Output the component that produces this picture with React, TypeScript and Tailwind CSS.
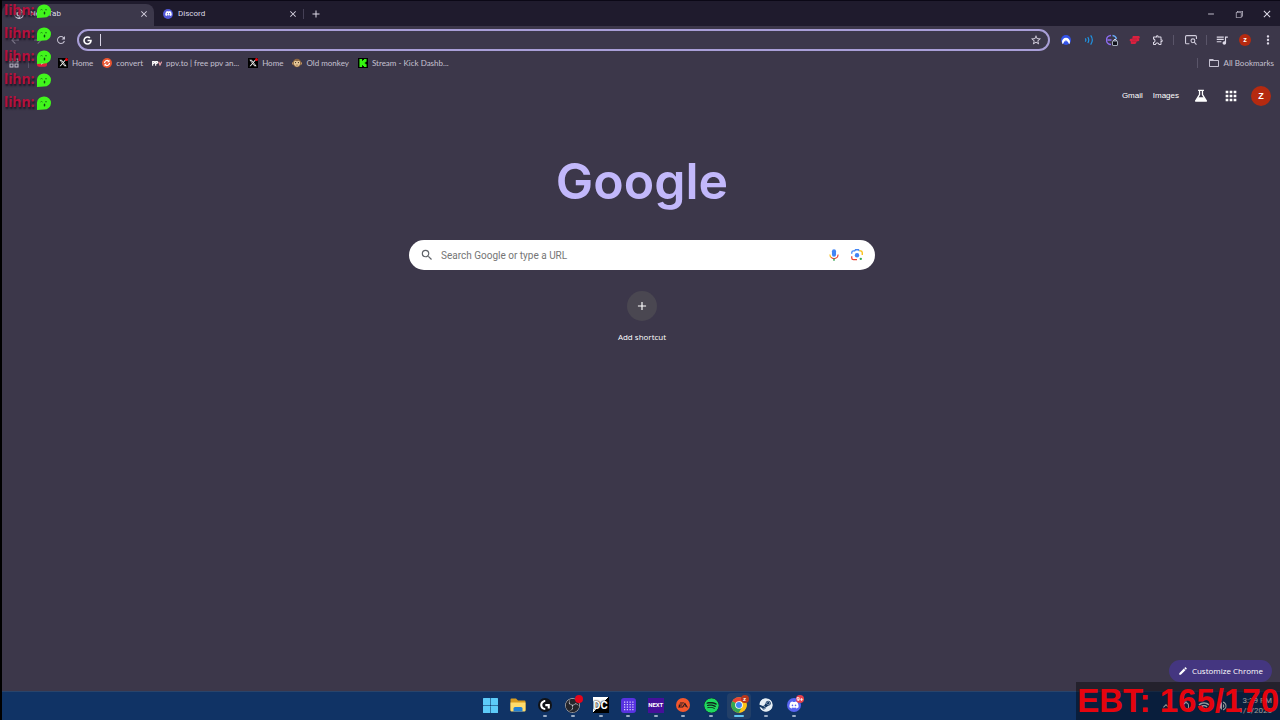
import type { ComponentType, ReactNode } from "react";
import {
  MdAdd, MdApps, MdArrowBack, MdArrowForward, MdClose, MdEdit, MdFolderOpen, MdMoreVert,
  MdOutlineExtension, MdQueueMusic, MdRefresh, MdSearch, MdStarOutline, MdWifi,
  MdVolumeUp, MdKeyboardArrowUp, MdNotificationsNone, MdOutlineGridView, MdRemove,
} from "react-icons/md";
import { FaDiscord, FaGoogle, FaSpotify, FaSteam, FaXTwitter } from "react-icons/fa6";
import { SiEa, SiKick, SiLogitechg, SiNordvpn, SiObsstudio } from "react-icons/si";
import { VscChromeRestore } from "react-icons/vsc";

type Icon = ComponentType<{ className?: string }>;

function GlobeIcon() {
  return (
    <svg viewBox="0 0 24 24" className="size-2.5">
      <circle cx="12" cy="12" r="10.5" fill="none" stroke="#d4d0df" strokeWidth="3" />
      <circle cx="12" cy="12" r="4.5" fill="none" stroke="#d4d0df" strokeWidth="3" />
      <path d="M12 7.5h9M8 14.5 4 7M16 14.5 12 22" stroke="#d4d0df" strokeWidth="3" />
    </svg>
  );
}

function ChromeIcon() {
  return (
    <svg viewBox="0 0 48 48" className="size-4">
      <circle cx="24" cy="24" r="23" fill="#fbc116" />
      <path d="M24 24 4 12.600A23 23 0 0 1 44 12.500Z" fill="#ea4335" />
      <path d="M24 24 4 12.500A23 23 0 0 0 24 47L34 29.500Z" fill="#34a853" />
      <path d="M24 12.500h20a23 23 0 0 1-20 34.500l10-17.500Z" fill="#fbc116" />
      <circle cx="24" cy="24" r="11.500" fill="#fff" />
      <circle cx="24" cy="24" r="9" fill="#4285f4" />
    </svg>
  );
}

function XIcon() {
  return (
    <span className="relative flex size-2.5 items-center justify-center bg-black text-white">
      <FaXTwitter className="size-2" />
      <span className="absolute top-0 right-0 size-[3px] rounded-full bg-red-600" />
    </span>
  );
}

function ConvertIcon() {
  return (
    <svg viewBox="0 0 24 24" className="size-2.5">
      <circle cx="12" cy="12" r="12" fill="#e9532f" />
      <path d="M6 12a6 6 0 0 1 10-4.500M18 12a6 6 0 0 1-10 4.500" fill="none" stroke="#fff" strokeWidth="3" />
      <path d="M18 4v6h-6zM6 20v-6h6z" fill="#fff" />
    </svg>
  );
}

function PpvIcon() {
  return (
    <svg viewBox="0 0 30 15" className="h-[5px] w-2.5">
      <path d="M2 14V2h5q3 4-4 6M11 14V2h5q3 4-4 6" fill="none" stroke="#fff" strokeWidth="3.500" />
      <path d="m20 2 4 10 5-10" fill="none" stroke="#f0a0a8" strokeWidth="3.500" />
    </svg>
  );
}

function MonkeyIcon() {
  return (
    <svg viewBox="0 0 24 24" className="size-2.5">
      <circle cx="3.500" cy="13" r="3.500" fill="#c79a68" />
      <circle cx="20.500" cy="13" r="3.500" fill="#c79a68" />
      <circle cx="12" cy="12" r="10" fill="#8c6640" />
      <path d="M12 8c8-5 9 5 6 9-3 5-9 5-12 0-3-4-2-14 6-9Z" fill="#e8c99a" />
      <circle cx="8.500" cy="11" r="1.500" fill="#3a2a1c" />
      <circle cx="15.500" cy="11" r="1.500" fill="#3a2a1c" />
      <path d="M9 17h6" stroke="#6f482c" strokeWidth="1.500" />
    </svg>
  );
}

function KickIcon() {
  return (
    <span className="flex size-2.5 items-center justify-center bg-black text-[#35f511]">
      <SiKick className="size-2" />
    </span>
  );
}

function YouTubeIcon() {
  return (
    <svg viewBox="0 0 24 18" className="h-2 w-2.5">
      <rect width="24" height="18" rx="5" fill="#e0203c" />
      <path d="m10 5 6 4-6 4z" fill="#fff" />
    </svg>
  );
}

function GhostIcon() {
  return (
    <svg viewBox="0 0 28 28" className="size-3.5">
      <path d="M0 28V13A14 13 0 1 1 14 27Z" fill="#41f51c" />
      <path d="M7 12q2-2 4 0M16 12q2-2 4 0" fill="none" stroke="#136b13" strokeWidth="1.600" />
      <ellipse cx="15" cy="18" rx="1.600" ry="3" fill="#0c4c10" />
    </svg>
  );
}

function MicIcon() {
  return (
    <svg viewBox="0 0 24 24" className="size-3.5">
      <rect x="8.500" y="2" width="7" height="13" rx="3.500" fill="#4285f4" />
      <path d="M5 11a7 7 0 0 0 2.500 5.500" fill="none" stroke="#fbbc04" strokeWidth="1.800" />
      <path d="M7 16a7 7 0 0 0 12-5" fill="none" stroke="#ea4335" strokeWidth="1.800" />
      <path d="M12 18v4" stroke="#34a853" strokeWidth="2.500" />
    </svg>
  );
}

function LensIcon() {
  return (
    <svg viewBox="0 0 24 24" className="size-3.5" fill="none" strokeWidth="2.200">
      <path d="M3 10V8a3 3 0 0 1 3-3h2l1.500-2h5L16 5" stroke="#4285f4" />
      <path d="M16 5h2a3 3 0 0 1 3 3v4" stroke="#fbbc04" />
      <path d="M3 14v3a3 3 0 0 0 3 3h6" stroke="#ea4335" />
      <circle cx="12" cy="12.500" r="3.800" fill="#4285f4" />
      <circle cx="18.500" cy="18.500" r="2" fill="#34a853" />
    </svg>
  );
}

function FlaskIcon() {
  return (
    <svg viewBox="0 0 24 24" className="size-3.5">
      <path d="M7 2.500h10M9.500 3v6.500L2.800 20.500h18.400L14.500 9.500V3" fill="none" stroke="#fff" strokeWidth="2.200" strokeLinejoin="round" />
      <path d="M7 14h10l5 7.500H2Z" fill="#fff" />
    </svg>
  );
}

function WavesIcon() {
  return (
    <svg viewBox="0 0 24 24" className="size-2.5" fill="none" stroke="#1e97e8" strokeWidth="2.800">
      <path d="M3 8q3 4 0 8M9 5q5 7 0 14M16 1q8 11 0 22" />
    </svg>
  );
}

function PrivacyIcon() {
  return (
    <svg viewBox="0 0 24 24" className="size-3" fill="none" strokeWidth="2.800">
      <path d="M10 3a9 9 0 0 0 0 18M3 12h8" stroke="#8c6cf0" />
      <path d="M13 3a9 9 0 0 1 8 7" stroke="#67a7f2" />
      <rect x="13" y="14" width="10" height="9" rx="1" fill="#11131c" stroke="#cfd8e8" strokeWidth="1.500" />
      <path d="M15.500 14v-2q2.500-3 5 0v2" stroke="#cfd8e8" strokeWidth="2" />
    </svg>
  );
}

function RedFlagIcon() {
  return (
    <svg viewBox="0 0 24 20" className="h-2.5 w-3">
      <path d="M8 2h12q3 1 1 5h-3q4 1 2 5l-5 1q0 4-3 5H5q-3-1-1-5-4-1-2-5l5-1q-1-4 1-5Z" fill="#d9213f" />
      <path d="M7 8h9M6 12.500h8" stroke="#a81c3a" strokeWidth="1.200" />
    </svg>
  );
}

function SidePanelSearchIcon() {
  return (
    <svg viewBox="0 0 24 22" className="h-3 w-3.5" fill="none" stroke="#d0ccdb" strokeWidth="2">
      <path d="M9 18H4a2 2 0 0 1-2-2V5a2 2 0 0 1 2-2h16a2 2 0 0 1 2 2v4" />
      <circle cx="15.500" cy="12.500" r="3.500" />
      <path d="m18 15 4 4.500" />
    </svg>
  );
}

function FolderAppIcon() {
  return (
    <svg viewBox="0 0 32 28" className="h-3.5 w-4">
      <path d="M1 3a2 2 0 0 1 2-2h9l4 4h13a2 2 0 0 1 2 2v18H1Z" fill="#d99c20" />
      <path d="M1 9h30v16a2 2 0 0 1-2 2H3a2 2 0 0 1-2-2Z" fill="#ffdc6c" />
      <path d="M7 27v-6q0-3 3-3h12q3 0 3 3v6Z" fill="#2380d4" />
    </svg>
  );
}

function WindowsIcon() {
  return (
    <svg viewBox="0 0 30 30" className="size-[15px]" fill="#5dcbf8">
      <rect width="14.500" height="14.500" rx="1" />
      <rect x="15.500" width="14.500" height="14.500" rx="1" />
      <rect y="15.500" width="14.500" height="14.500" rx="1" />
      <rect x="15.500" y="15.500" width="14.500" height="14.500" rx="1" />
    </svg>
  );
}

function Badge({ children, className }: { children?: ReactNode; className: string }) {
  return (
    <span className={`absolute -top-0.5 -right-0.5 flex size-2 items-center justify-center rounded-full text-[6px] leading-none font-bold text-white ${className}`}>
      {children}
    </span>
  );
}

function Round({ icon: I, className }: { icon: Icon; className: string }) {
  return (
    <span className={`flex items-center justify-center rounded-full ${className}`}>
      <I className="size-2.5" />
    </span>
  );
}

const apps: { name: string; running: boolean; active?: boolean; art: ReactNode }[] = [
  { name: "Start", running: false, art: <WindowsIcon /> },
  { name: "File Explorer", running: false, art: <FolderAppIcon /> },
  { name: "Logitech G Hub", running: true, art: <Round icon={SiLogitechg} className="size-3.5 bg-[#101217] text-white" /> },
  {
    name: "OBS Studio",
    running: true,
    art: (
      <>
        <SiObsstudio className="size-[15px] rounded-full bg-[#24252b] text-[#c3c5cc]" />
        <Badge className="bg-[#e3051b]" />
      </>
    ),
  },
  {
    name: "DC",
    running: true,
    art: (
      <span className="flex size-4 items-center justify-center bg-linear-to-br from-white from-50% to-black to-50% text-[11px] leading-none font-bold text-white [text-shadow:0_0_2px_#000,0_0_1px_#000]">
        DC
      </span>
    ),
  },
  {
    name: "Deck",
    running: true,
    art: (
      <svg viewBox="0 0 30 30" className="size-[15px]">
        <rect width="30" height="30" rx="6" fill="#5732e0" />
        <path d="M6 8h19M6 13h19M6 18h19M6 23h19" stroke="#d9cffc" strokeWidth="2.500" strokeDasharray="2.500 3" />
      </svg>
    ),
  },
  {
    name: "NEXT",
    running: true,
    art: <span className="flex h-[15px] w-4 items-center justify-center bg-[#46109a] text-[6px] leading-none font-bold text-white">NEXT</span>,
  },
  { name: "EA", running: true, art: <Round icon={SiEa} className="size-3.5 bg-[#f4572c] text-[#21191f]" /> },
  { name: "Spotify", running: true, art: <FaSpotify className="size-[15px] rounded-full bg-[#10241b] text-[#1ed760]" /> },
  {
    name: "Google Chrome",
    running: true,
    active: true,
    art: (
      <>
        <ChromeIcon />
        <Badge className="bg-[#b9361a]">z</Badge>
      </>
    ),
  },
  { name: "Steam", running: true, art: <FaSteam className="size-3.5 rounded-full bg-[#143762] text-[#e6eef5]" /> },
  {
    name: "Discord",
    running: true,
    art: (
      <>
        <Round icon={FaDiscord} className="size-3.5 bg-[#5865f2] text-white" />
        <Badge className="bg-[#e5404c]">9+</Badge>
      </>
    ),
  },
];

const bookmarks: { label: string; art: ReactNode }[] = [
  { label: "Home", art: <XIcon /> },
  { label: "convert", art: <ConvertIcon /> },
  { label: "ppv.to | free ppv an...", art: <PpvIcon /> },
  { label: "Home", art: <XIcon /> },
  { label: "Old monkey", art: <MonkeyIcon /> },
  { label: "Stream - Kick Dashb...", art: <KickIcon /> },
];

const iconButton = "flex size-4 shrink-0 items-center justify-center";

function TabStrip() {
  return (
    <header className="flex h-[26px] shrink-0 border-t border-[#0b0816] bg-[#1f1b2d]">
      <div className="mt-[3px] flex w-[152px] items-center rounded-t-lg bg-[#3c384b] pr-0.5 pb-[3px] pl-3">
        <GlobeIcon />
        <span className="ml-1.5 flex-1">New Tab</span>
        <button aria-label="Close New Tab" className={iconButton}><MdClose className="size-2.5" /></button>
      </div>
      <div className="flex w-[149px] items-center pr-0.5 pl-[9px]">
        <span className="flex size-2.5 items-center justify-center rounded-full bg-[#5258d8] text-white"><FaDiscord className="size-[7px]" /></span>
        <span className="ml-[5px] flex-1">Discord</span>
        <button aria-label="Close Discord" className={iconButton}><MdClose className="size-2.5" /></button>
      </div>
      <div className="flex items-center gap-1">
        <span className="h-2.5 w-px bg-[#454056]" />
        <button aria-label="New tab" className={iconButton}><MdAdd className="size-3" /></button>
      </div>
      <div className="ml-auto flex items-center gap-3 pr-[5px]">
        <button aria-label="Minimize" className={iconButton}><MdRemove className="size-2.5" /></button>
        <button aria-label="Restore" className={iconButton}><VscChromeRestore className="size-2.5" /></button>
        <button aria-label="Close window" className={iconButton}><MdClose className="size-3" /></button>
      </div>
    </header>
  );
}

function Toolbar() {
  return (
    <div className="flex h-7 shrink-0 items-center pr-1">
      <div className="flex w-[75px] items-center gap-[7px] pl-[5px] text-[#c5c1d1]">
        <button aria-label="Back" className={iconButton}><MdArrowBack className="size-3 opacity-50" /></button>
        <button aria-label="Forward" className={iconButton}><MdArrowForward className="size-3 opacity-40" /></button>
        <button aria-label="Reload" className={iconButton}><MdRefresh className="size-3" /></button>
      </div>
      <div className="flex h-[22px] flex-1 items-center rounded-full border-2 border-[#a99fd8] bg-[#3c384b] px-1">
        <FaGoogle className="size-[9px] text-white" />
        <span className="ml-2 h-3 w-px bg-[#d9d5e6]" />
        <input aria-label="Address" className="min-w-0 flex-1 bg-transparent px-1 outline-none" />
        <button aria-label="Bookmark this tab" className={iconButton}><MdStarOutline className="size-3" /></button>
      </div>
      <div className="ml-2 flex items-center gap-[7px]">
        <button aria-label="NordVPN" className={iconButton}>
          <span className="flex size-2.5 items-end justify-center rounded-full bg-[#3353e8] text-white"><SiNordvpn className="size-2" /></span>
        </button>
        <button aria-label="Audio" className={iconButton}><WavesIcon /></button>
        <button aria-label="Privacy" className={iconButton}><PrivacyIcon /></button>
        <button aria-label="Blocker" className={iconButton}><RedFlagIcon /></button>
        <button aria-label="Extensions" className={iconButton}><MdOutlineExtension className="size-3" /></button>
        <span className="mr-0.5 h-2.5 w-px bg-[#5a5569]" />
        <button aria-label="Side panel" className={iconButton}><SidePanelSearchIcon /></button>
        <span className="h-2.5 w-px bg-[#5a5569]" />
        <button aria-label="Media" className={iconButton}><MdQueueMusic className="size-3.5" /></button>
        <button aria-label="Profile" className={iconButton}>
          <span className="flex size-3 items-center justify-center rounded-full bg-[#b52a10] text-[7px] leading-none font-bold text-white">z</span>
        </button>
        <button aria-label="Menu" className={iconButton}><MdMoreVert className="size-3.5" /></button>
      </div>
    </div>
  );
}

function BookmarksBar() {
  return (
    <nav aria-label="Bookmarks" className="flex h-[18px] shrink-0 items-center px-1.5 font-[Lato,sans-serif] text-[#c5c1d1]">
      <button aria-label="Apps" className="mr-2"><MdOutlineGridView className="size-3" /></button>
      <span className="h-2.5 w-px bg-[#5a5569]" />
      <a href="#youtube" aria-label="YouTube" className="mr-[11px] ml-2"><YouTubeIcon /></a>
      <div className="flex items-center gap-[9px]">
        {bookmarks.map((b, i) => (
          <a key={i} href="#bookmark" className="flex items-center gap-1 whitespace-nowrap">
            {b.art}
            {b.label}
          </a>
        ))}
      </div>
      <span className="ml-auto h-2.5 w-px bg-[#5a5569]" />
      <button className="ml-2.5 flex items-center gap-1 whitespace-nowrap">
        <MdFolderOpen className="size-3" />
        All Bookmarks
      </button>
    </nav>
  );
}

function NewTabPage() {
  return (
    <main className="flex flex-1 flex-col items-center pl-0.5">
      <div className="mt-3.5 flex items-center self-end pr-[9px] font-['Liberation_Sans',sans-serif] text-white">
        <a href="#gmail" className="mr-2.5">Gmail</a>
        <a href="#images" className="mr-3.5">Images</a>
        <button aria-label="Labs" className={iconButton}><FlaskIcon /></button>
        <button aria-label="Google apps" className="mr-3 ml-3.5"><MdApps className="size-4" /></button>
        <button aria-label="Account" className="flex size-5 items-center justify-center rounded-full bg-[#b52a10] text-[9px] font-bold">Z</button>
      </div>
      <h1 className="mt-[42px] font-[Inter,sans-serif] text-[50px] leading-[66px] font-semibold text-[#c2b8fb]">Google</h1>
      <form className="mt-[26px] flex h-[30px] w-[466px] max-w-full items-center rounded-full bg-white px-[11px]">
        <MdSearch className="size-3.5 text-[#5f6368]" />
        <input aria-label="Search" placeholder="Search Google or type a URL" className="ml-[7px] min-w-0 flex-1 bg-transparent pt-px font-[Roboto,sans-serif] text-[10px] outline-none placeholder:text-[#757575]" />
        <button type="button" aria-label="Voice search" className="mr-[9px]"><MicIcon /></button>
        <button type="button" aria-label="Image search"><LensIcon /></button>
      </form>
      <button className="mt-[21px] flex flex-col items-center font-['Open_Sans',sans-serif] text-white">
        <span className="mb-2.5 flex size-[30px] items-center justify-center rounded-full bg-[#4a4751]"><MdAdd className="size-3.5" /></span>
        Add shortcut
      </button>
      <button className="mt-auto mr-2 mb-[9px] flex h-[22px] items-center gap-1 self-end rounded-full bg-[#443680] px-[9px] font-['Open_Sans',sans-serif] text-white">
        <MdEdit className="size-2.5" />
        Customize Chrome
      </button>
    </main>
  );
}

function Taskbar() {
  return (
    <footer className="relative flex h-[29px] shrink-0 items-center justify-center border-t border-[#29446b] bg-[#103365] pl-0.5">
      <div className="flex h-full w-[328px] items-center justify-between">
        {apps.map((a) => (
          <button key={a.name} aria-label={a.name} className={`flex h-[26px] w-6 flex-col items-center rounded-sm pt-1 ${a.active ? "bg-[#223f68]" : ""}`}>
            <span className="relative flex size-4 shrink-0 items-center justify-center">{a.art}</span>
            {a.running && <span className={`mt-0.5 h-0.5 shrink-0 rounded-full ${a.active ? "w-2.5 bg-[#62c5f2]" : "w-1 bg-[#9aacc5]"}`} />}
          </button>
        ))}
      </div>
      <div className="absolute inset-y-0 right-2 flex items-center text-white">
        <MdKeyboardArrowUp className="mr-2 size-3" />
        <MdNotificationsNone className="mr-1.5 size-3" />
        <MdWifi className="mr-1.5 size-3" />
        <MdVolumeUp className="mr-2.5 size-3" />
        <div className="text-right leading-[10px]">
          3:39 PM
          <br />
          1/5/2026
        </div>
      </div>
    </footer>
  );
}

export default function App() {
  return (
    <div className="relative flex h-screen flex-col overflow-hidden border-l-2 border-black bg-[#3c374a] font-[Roboto,sans-serif] text-[8px] leading-3 text-[#dedae8]">
      <TabStrip />
      <Toolbar />
      <BookmarksBar />
      <NewTabPage />
      <Taskbar />
      <ul className="absolute top-0 left-0.5 font-['Noto_Sans',sans-serif] text-[14px] font-bold text-[#b4103c] [text-shadow:1px_2px_2px_#1a1020]">
        {[0, 1, 2, 3, 4].map((n) => (
          <li key={n} className="flex h-[23px] items-start gap-0.5 pt-1">
            <span className="leading-3">lihn:</span>
            <GhostIcon />
          </li>
        ))}
      </ul>
      <aside className="absolute right-0 bottom-0 bg-black/40 px-px pb-px font-['Liberation_Sans',sans-serif] text-[33px] leading-[37px] font-bold whitespace-nowrap text-[#e6040e]">
        EBT: 165/170
      </aside>
    </div>
  );
}
